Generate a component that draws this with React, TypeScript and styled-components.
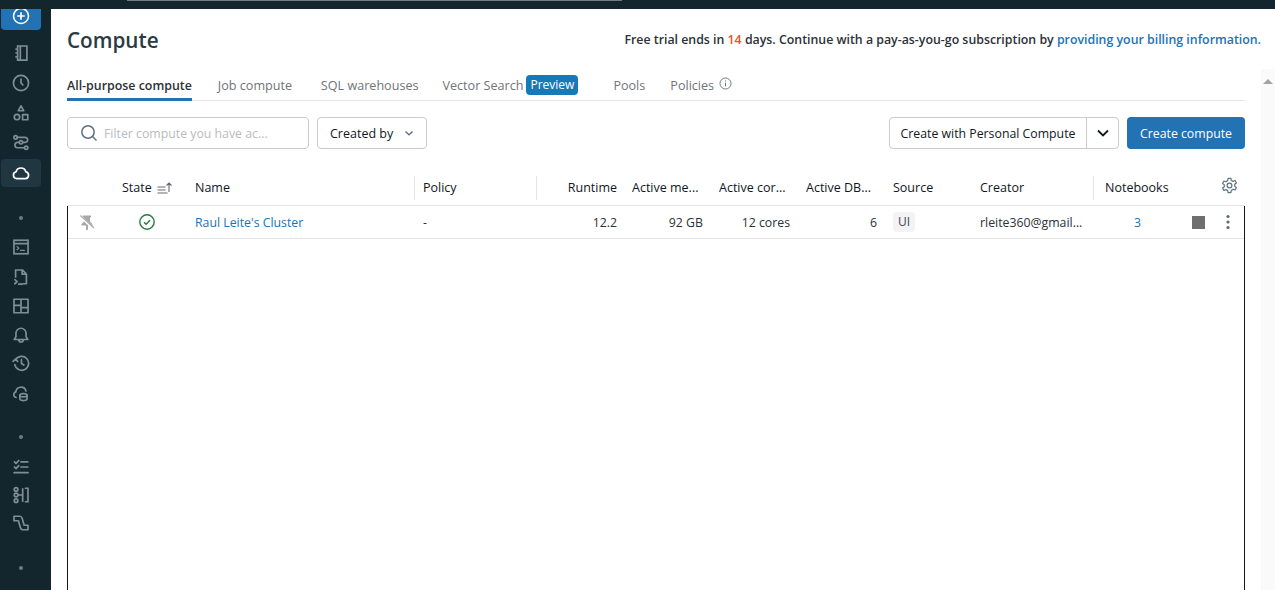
import React from "react";
import styled, { createGlobalStyle } from "styled-components";

const Global = createGlobalStyle`
  html, body { margin: 0; padding: 0; background: #fff; overflow: hidden; }
  * { box-sizing: border-box; }
  body { font-family: "Open Sans", "Noto Sans", "Liberation Sans", sans-serif; font-size: 13px; color: #11171c; }
`;

const Page = styled.div`
  width: 1275px; height: 590px; display: flex; flex-direction: column; overflow: hidden; background: #13262e;
`;
const TopBar = styled.div`
  height: 9px; flex: none; padding-left: 127px;
  &::before { content: ""; display: block; width: 495px; height: 1px; background: #6f7c82; }
`;
const Body = styled.div`
  flex: 1; display: flex; min-height: 0;
`;
const Sidebar = styled.nav`
  width: 51px; flex: none; display: flex; flex-direction: column; align-items: center; padding: 0 11px 0 1px;
`;
const NewButton = styled.div`
  width: 40px; height: 21px; flex: none; background: #2272b4; border-radius: 0 0 4px 4px; display: flex; align-items: flex-start; justify-content: center;
  color: #fff; overflow: hidden;
  svg { margin-top: -2px; flex: none; }
`;
const NavIcon = styled.div<{ $active?: boolean; $mt?: number }>`
  width: 40px; height: 28px; flex: none; display: flex; align-items: center; justify-content: center; border-radius: 4px;
  color: ${p => (p.$active ? "#fff" : "#7f8e95")};
  background: ${p => (p.$active ? "#203640" : "transparent")};
  margin-top: ${p => p.$mt ?? 2}px;
`;
const Dot = styled.div<{ $mt: number }>`
  width: 4px; height: 4px; border-radius: 50%; background: #6d7c83; flex: none; margin-top: ${p => p.$mt}px;
`;
const Main = styled.main`
  flex: 1; background: #fff; padding: 0 30px 0 16px; position: relative; min-width: 0;
`;
const Header = styled.header`
  display: flex; justify-content: space-between; align-items: flex-start; height: 66px; padding-top: 15px; margin-right: -16px;
`;
const Title = styled.h1`
  margin: 0; font-size: 20.7px; line-height: 32px; font-weight: 600; color: #2b3a42;
`;
const Trial = styled.div`
  font-size: 12.35px; font-weight: 600; line-height: 18px; padding-top: 7px; color: #2b3136; white-space: nowrap;
  b { color: #e5532d; font-weight: 600; }
  a { color: #2272b4; text-decoration: none; }
`;
const Tabs = styled.div`
  display: flex; height: 26px; border-bottom: 1px solid #e5e5e5; gap: 26px; align-items: flex-start;
`;
const Tab = styled.div<{ $active?: boolean; $ml?: number; $minW?: number }>`
  height: 26px; font-size: ${p => (p.$active ? 12.4 : 12.6)}px; line-height: 22px; white-space: nowrap; font-weight: ${p => (p.$active ? 600 : 500)}; display: flex; align-items: flex-start; gap: 3px;
  color: ${p => (p.$active ? "#2b3136" : "#6f7478")};
  ${p => (p.$active ? "border-bottom: 3px solid #2272b4;" : "")}
  ${p => (p.$ml ? `margin-left: ${p.$ml}px;` : "")}
  ${p => (p.$minW ? `min-width: ${p.$minW}px;` : "")}
`;
const PreviewTag = styled.span`
  background: #167ab8; color: #fff; border-radius: 4px; height: 20px; line-height: 20px; padding: 0 4px; font-size: 12px; font-weight: 500;
`;
const Toolbar = styled.div`
  display: flex; align-items: center; gap: 8px; height: 32px; margin-top: 16px;
`;
const Search = styled.div`
  width: 242px; height: 32px; border: 1px solid #cbcbcb; border-radius: 4px; display: flex; align-items: center; padding-left: 12px; gap: 6px;
  font-size: 12.3px; color: #b7bcc0; white-space: nowrap;
`;
const Btn = styled.div`
  height: 32px; width: 110px; border: 1px solid #cbcbcb; border-radius: 4px; display: flex; align-items: center; padding: 0 12px; font-size: 12.5px; color: #11171c; white-space: nowrap; justify-content: space-between; background: #fff;
`;
const Spacer = styled.div` flex: 1; `;
const SplitGroup = styled.div`
  display: flex; height: 32px; border: 1px solid #cbcbcb; border-radius: 4px; font-size: 12.3px; color: #11171c; align-items: stretch;
`;
const SplitLabel = styled.div`
  width: 197px; display: flex; align-items: center; justify-content: center; white-space: nowrap; border-right: 1px solid #cbcbcb;
`;
const SplitCaret = styled.div`
  flex: 1; width: 31px; display: flex; align-items: center; justify-content: center;
`;
const Primary = styled.div`
  width: 118px; height: 32px; background: #2272b4; color: #fff; border-radius: 4px; display: flex; align-items: center; justify-content: center; font-size: 12.3px; font-weight: 500; white-space: nowrap;
`;
const TableHead = styled.div`
  display: grid; grid-template-columns: 47px 73px 228px 122px 87px 87px 87px 87px 87px 122px 88px 1fr; height: 41px; margin-top: 16px; border-bottom: 1px solid #e5e5e5; align-items: center; font-size: 12.5px; font-weight: 500; color: #11171c;
`;
const HeadCell = styled.div<{ $right?: boolean; $divider?: boolean; $pl?: number }>`
  padding: 0 ${p => (p.$right ? 7 : 8)}px 0 ${p => p.$pl ?? 8}px; height: 24px; line-height: 24px; white-space: nowrap; overflow: hidden; text-overflow: ellipsis; display: flex; align-items: center; gap: 5px; margin-top: 5px;
  justify-content: ${p => (p.$right ? "flex-end" : "flex-start")};
  ${p => (p.$divider ? "border-right: 1px solid #e5e5e5;" : "")}
`;
const Trunc = styled.span` overflow: hidden; text-overflow: ellipsis; white-space: nowrap; `;
const TableBody = styled.div`
  border-left: 1px solid #11171c; border-right: 1px solid #11171c; height: 384px;
`;
const Row = styled.div`
  display: grid; grid-template-columns: 46px 73px 228px 122px 87px 87px 87px 87px 87px 122px 88px 1fr; height: 33px; border-bottom: 1px solid #e5e5e5; align-items: center; font-size: 12.3px; color: #2b3136;
`;
const Cell = styled.div<{ $right?: boolean; $pl?: number; $pr?: number }>`
  padding: 0 ${p => p.$pr ?? 8}px 0 ${p => p.$pl ?? 8}px; white-space: nowrap; display: flex; align-items: center; min-width: 0;
  justify-content: ${p => (p.$right ? "flex-end" : "flex-start")};
`;
const Link = styled.span` color: #2272b4; `;
const UiTag = styled.span`
  background: #f3f3f3; border-radius: 4px; height: 20px; line-height: 20px; padding: 0 5px; color: #3c4650; font-size: 12px;
`;
const ActionsCell = styled.div`
  display: flex; align-items: center; justify-content: flex-end; gap: 21px; padding-right: 14px;
`;
const StopSquare = styled.div`
  width: 13px; height: 13px; background: #6f6f6f; flex: none;
`;
const GearSlot = styled.div`
  display: flex; justify-content: flex-end; padding-right: 7px; margin-top: 1px;
`;
const Scrollbar = styled.div`
  position: absolute; right: 0; top: 60px; width: 14px; bottom: 0; background: #fafafa; display: flex; justify-content: center; padding-top: 10px;
  &::before { content: ""; width: 0; height: 0; border-left: 5px solid transparent; border-right: 5px solid transparent; border-bottom: 5px solid #a3a3a3; }
`;

const S = ({ children, size = 18, w = 1.5 }: { children: React.ReactNode; size?: number; w?: number }) => (
  <svg width={size} height={size} viewBox="0 0 16 16" fill="none" stroke="currentColor" strokeWidth={w} strokeLinecap="round" strokeLinejoin="round">{children}</svg>
);

export default function App() {
  return (
    <Page>
      <Global />
      <TopBar />
      <Body>
        <Sidebar>
          <NewButton>
            <svg width="18" height="18" viewBox="0 0 18 18"><circle cx="9" cy="9" r="7.5" fill="#2272b4" stroke="#fff" strokeWidth="1.6" /><path d="M9 5.2v7.6M5.2 9h7.6" stroke="#fff" strokeWidth="1.7" /></svg>
          </NewButton>
          <NavIcon $mt={9}>
            <S><path d="M5 1.75h8.25v12.5H5zM7.4 1.75v12.5M3 4.5h2M3 8h2M3 11.5h2" strokeLinejoin="miter" strokeLinecap="butt" /></S>
          </NavIcon>
          <NavIcon>
            <S><circle cx="8" cy="8" r="6.75" /><path d="M8 4.5V8l1.6 1.6" /></S>
          </NavIcon>
          <NavIcon>
            <S><path d="M8 1.6 10.4 6H5.6z" /><circle cx="4.4" cy="11.6" r="2.4" /><rect x="9.4" y="9.4" width="4.6" height="4.6" /></S>
          </NavIcon>
          <NavIcon>
            <S><circle cx="3.2" cy="3" r="1.5" /><path d="M4.7 3h7a2.2 2.2 0 0 1 0 4.4H5a2.3 2.3 0 0 0 0 4.8h6" /><circle cx="8" cy="7.4" r="1.5" fill="#13262e" /><circle cx="12.6" cy="12.2" r="1.5" /></S>
          </NavIcon>
          <NavIcon $active>
            <S><path d="M4.2 13A3.1 3.1 0 0 1 3.6 6.9 4.5 4.5 0 0 1 12.3 6.9 3.1 3.1 0 0 1 12 13z" /></S>
          </NavIcon>
          <Dot $mt={29} />
          <NavIcon $mt={13}>
            <S><rect x="1.75" y="2" width="12.5" height="12" strokeLinejoin="miter" /><path d="M1.75 5h12.5" /><path d="m4.5 7.6 1.6 1.4-1.6 1.4M7.5 11H11" strokeWidth="1.1" /></S>
          </NavIcon>
          <NavIcon>
            <S><path d="M3.2 8V1.75h6l3.6 3.6V14h-3M9 1.75V5.5h3.8M2.5 10.4 4.6 12.2 2.5 14M6 14.4h3" /></S>
          </NavIcon>
          <NavIcon $mt={1}>
            <S><rect x="1.75" y="2" width="12.5" height="12" /><path d="M1.75 7.5h6.25M8 2v12M8 9.5h6.25" strokeLinecap="butt" /></S>
          </NavIcon>
          <NavIcon $mt={1}>
            <S><path d="M2 12h12l-1.5-2.5V6.5a4.5 4.5 0 0 0-9 0v3zM6 12.2a2 2 0 0 0 4 0" /></S>
          </NavIcon>
          <NavIcon $mt={0}>
            <S><path d="M3.2 5.2A6.2 6.2 0 1 1 2.5 9.5" /><path d="M1 6.6 3 4.6 5 6.6M8.4 5v3.4l2.1 1.4" /></S>
          </NavIcon>
          <NavIcon>
            <S><path d="M3.6 12A2.6 2.6 0 0 1 3.4 7 4.6 4.6 0 0 1 12.4 6.2" /><ellipse cx="10.2" cy="10" rx="3.2" ry="1.5" /><path d="M7 10v3.2c0 .8 1.4 1.5 3.2 1.5s3.2-.7 3.2-1.5V10" /></S>
          </NavIcon>
          <Dot $mt={28} />
          <NavIcon $mt={14}>
            <S><path d="M2.2 3.4 3.6 4.8 6 2.2M2.2 8 3.6 9.4 6 6.8M8 3.5h6M8 8h6M1.8 13h12.4" /></S>
          </NavIcon>
          <NavIcon $mt={0}>
            <S><circle cx="3.6" cy="3" r="1.6" /><circle cx="3.6" cy="8" r="1.6" /><circle cx="3.6" cy="13" r="1.6" /><path d="M5.5 8H9.5M9.5 2.5v11M12 2h2.2v12H12" strokeLinejoin="miter" /></S>
          </NavIcon>
          <NavIcon $mt={0}>
            <S><path d="M1.8 2H7c1 0 1.7.7 2 1.7L10.8 10H14.2v4H9.5c-1 0-1.7-.7-2-1.7L5.7 6H1.800z" /></S>
          </NavIcon>
          <Dot $mt={29} />
        </Sidebar>
        <Main>
          <Header>
            <Title>Compute</Title>
            <Trial>Free trial ends in <b>14</b> days. Continue with a pay-as-you-go subscription by <a>providing your billing information.</a></Trial>
          </Header>
          <Tabs>
            <Tab $active>All-purpose compute</Tab>
            <Tab $minW={77}>Job compute</Tab>
            <Tab>SQL warehouses</Tab>
            <Tab $ml={-2}>Vector Search<PreviewTag>Preview</PreviewTag></Tab>
            <Tab $ml={9}>Pools</Tab>
            <Tab $ml={-1}>Policies
              <svg width="13" height="13" viewBox="0 0 16 16" fill="none" stroke="#6f7478" strokeWidth="1.2" style={{ marginTop: 2, marginLeft: 2 }}><circle cx="8" cy="8" r="6.8" /><path d="M8 7v4.5M8 4.2v1.3" /></svg>
            </Tab>
          </Tabs>
          <Toolbar>
            <Search>
              <svg width="18" height="18" viewBox="0 0 18 18" fill="none" stroke="#5f7281" strokeWidth="1.5"><circle cx="8" cy="8" r="6.2" /><path d="m12.5 12.5 4 4" /></svg>
              Filter compute you have ac...
            </Search>
            <Btn>Created by
              <svg width="10" height="10" viewBox="0 0 10 10" fill="none" stroke="#5f7281" strokeWidth="1.4"><path d="m1.5 3.500 3.500 3.200 3.500-3.200" /></svg>
            </Btn>
            <Spacer />
            <SplitGroup>
              <SplitLabel>Create with Personal Compute</SplitLabel>
              <SplitCaret>
                <svg width="12" height="12" viewBox="0 0 12 12" fill="none" stroke="#11171c" strokeWidth="1.8"><path d="m1 3.500 5 5 5-5" /></svg>
              </SplitCaret>
            </SplitGroup>
            <Primary>Create compute</Primary>
          </Toolbar>
          <TableHead>
            <HeadCell />
            <HeadCell>State
              <svg width="16" height="14" viewBox="0 0 16 14" fill="none" stroke="#5f6a72" strokeWidth="1.1"><path d="M0.5 6h8M0.5 9h8M0.5 12h10M12 11V2M9.5 4.500 12 2l2.500 2.500" /></svg>
            </HeadCell>
            <HeadCell $divider>Name</HeadCell>
            <HeadCell $divider>Policy</HeadCell>
            <HeadCell $right>Runtime</HeadCell>
            <HeadCell><Trunc>Active me...</Trunc></HeadCell>
            <HeadCell><Trunc>Active cor...</Trunc></HeadCell>
            <HeadCell><Trunc>Active DB...</Trunc></HeadCell>
            <HeadCell>Source</HeadCell>
            <HeadCell $divider>Creator</HeadCell>
            <HeadCell $pl={11}>Notebooks</HeadCell>
            <GearSlot>
              <svg width="17" height="17" viewBox="0 0 24 24" fill="none" stroke="#5f7281" strokeWidth="1.7" strokeLinejoin="round"><path d="M10 2h4l.6 3 2.400 1.200 2.800-1.200 2 3.400-2.400 1.900v2.800l2.400 1.900-2 3.400-2.800-1.200L14.600 19 14 22h-4l-.6-3L7 17.800l-2.800 1.200-2-3.400L4.600 13.700v-2.800L2.200 9l2-3.400L7 6.800 9.400 5z" /><circle cx="12" cy="12" r="3.400" /></svg>
            </GearSlot>
          </TableHead>
          <TableBody>
            <Row>
              <Cell $pl={11} $pr={0}>
                <svg width="16" height="17" viewBox="0 0 16 17" fill="#a8a8a8"><path d="M4 1.500h8v1.500l-1 .8v3.700l2.500 2.500v1.500H9v4l-1 1-1-1v-4H2.500V10L5 7.500V3.800l-1-.8z" /><path d="M1.500 2.500l13 12" stroke="#fff" strokeWidth="2.600" /><path d="M1.500 1.500l13.500 12.500" stroke="#a8a8a8" strokeWidth="1.200" /></svg>
              </Cell>
              <Cell $pl={25} $pr={0}>
                <svg width="16" height="16" viewBox="0 0 16 16" fill="none" stroke="#277c43" strokeWidth="1.4"><circle cx="8" cy="8" r="7.200" /><path d="m5 8.200 2.100 2 3.900-3.900" /></svg>
              </Cell>
              <Cell><Link>Raul Leite's Cluster</Link></Cell>
              <Cell>-</Cell>
              <Cell $right $pr={7}>12.2</Cell>
              <Cell $right>92 GB</Cell>
              <Cell $right>12 cores</Cell>
              <Cell $right>6</Cell>
              <Cell><UiTag>UI</UiTag></Cell>
              <Cell><Trunc>rleite360@gmail...</Trunc></Cell>
              <Cell $pl={40} $pr={0}><Link>3</Link></Cell>
              <ActionsCell>
                <StopSquare />
                <svg width="4" height="16" viewBox="0 0 4 16" fill="#5f6a72"><circle cx="2" cy="2.500" r="1.600" /><circle cx="2" cy="8" r="1.600" /><circle cx="2" cy="13.500" r="1.600" /></svg>
              </ActionsCell>
            </Row>
          </TableBody>
          <Scrollbar />
        </Main>
      </Body>
    </Page>
  );
}
